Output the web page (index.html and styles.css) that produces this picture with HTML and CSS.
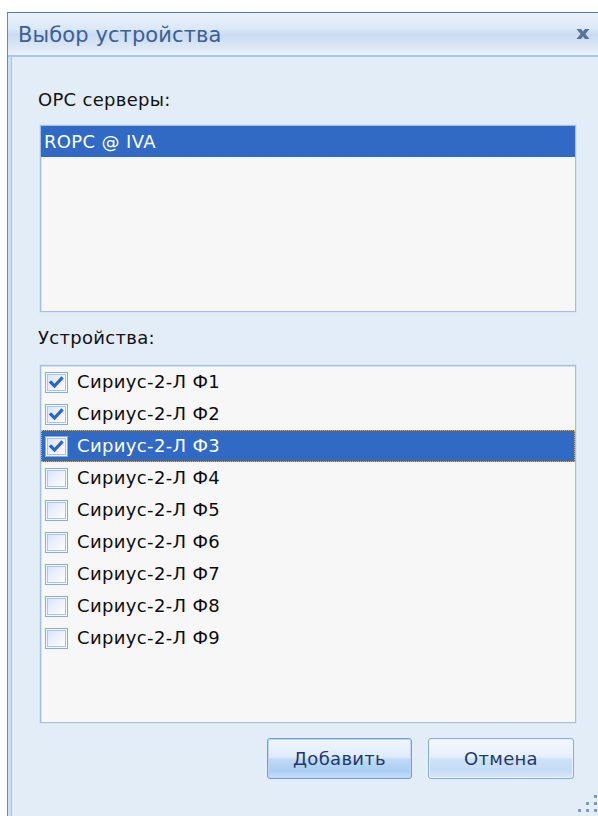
FILE: index.html
```html
<!DOCTYPE html>
<html lang="ru">
<head>
<meta charset="utf-8">
<title>Выбор устройства</title>
<link rel="stylesheet" href="styles.css">
</head>
<body>
<div class="window">
  <div class="titlebar">
    <span class="title">Выбор устройства</span>
    <svg class="close" width="16" height="12" viewBox="0 0 16 12">
      <path d="M1.5 1 H6 L8 3.6 L10 1 H14.5 L10.4 6 L14.5 11 H10 L8 8.4 L6 11 H1.5 L5.6 6 Z"/>
    </svg>
  </div>
  <div class="frame">
    <div class="content">
      <div class="label">ОРС серверы:</div>
      <div class="list servers">
        <div class="row selected">ROPC @ IVA</div>
      </div>
      <div class="label devices-label">Устройства:</div>
      <div class="list devices">
        <div class="row"><span class="check on"></span>Сириус-2-Л Ф1</div>
        <div class="row"><span class="check on"></span>Сириус-2-Л Ф2</div>
        <div class="row selected focused"><span class="check on"></span>Сириус-2-Л Ф3</div>
        <div class="row"><span class="check"></span>Сириус-2-Л Ф4</div>
        <div class="row"><span class="check"></span>Сириус-2-Л Ф5</div>
        <div class="row"><span class="check"></span>Сириус-2-Л Ф6</div>
        <div class="row"><span class="check"></span>Сириус-2-Л Ф7</div>
        <div class="row"><span class="check"></span>Сириус-2-Л Ф8</div>
        <div class="row"><span class="check"></span>Сириус-2-Л Ф9</div>
      </div>
      <div class="buttons">
        <button class="btn default">Добавить</button>
        <button class="btn">Отмена</button>
      </div>
    </div>
    <svg class="grip" width="20" height="18" viewBox="0 0 20 18">
      <rect x="16" y="0" width="3" height="3"/>
      <rect x="8" y="7" width="3" height="3"/>
      <rect x="16" y="7" width="3" height="3"/>
      <rect x="0" y="14" width="3" height="3"/>
      <rect x="8" y="14" width="3" height="3"/>
      <rect x="16" y="14" width="3" height="3"/>
    </svg>
  </div>
</div>
</body>
</html>
```
FILE: styles.css
```css
html, body {
  margin: 0;
  padding: 0;
  background: #ffffff;
  overflow: hidden;
}

body {
  width: 598px;
  height: 816px;
  font-family: "DejaVu Sans", sans-serif;
}

.window {
  margin: 12px 0 0 7px;
  width: 610px;
  height: 820px;
  display: flex;
  flex-direction: column;
  border-top: 1px solid #4f7db9;
  border-left: 1px solid #5e8bc6;
  box-sizing: border-box;
}

/* caption strip */
.titlebar {
  height: 44px;
  flex: none;
  display: flex;
  align-items: center;
  padding-left: 10px;
  box-sizing: border-box;
  background: linear-gradient(#eaf2fb 0%, #dde9f7 35%, #c9dcf3 52%, #dbe7f6 80%, #eaf1fa 100%);
  border-bottom: 2px solid #a9c5e8;
  position: relative;
}

.title {
  font-size: 21px;
  color: #3d5f93;
  letter-spacing: 0.1px;
  padding-top: 1px;
}

.close {
  position: absolute;
  left: 567px;
  top: 15px;
  fill: #5b7297;
}

/* body of the dialog with its inner frame line */
.frame {
  flex: 1;
  display: flex;
  background: #e3edf8;
  border-left: 3px solid #cfdff3;
  box-shadow: inset 1px 0 0 #a8c3e6;
  position: relative;
}

.content {
  display: flex;
  flex-direction: column;
  padding: 32px 0 0 29px;
}

.label {
  font-size: 18px;
  line-height: 22px;
  color: #111111;
  margin-left: -2px;
  letter-spacing: 0.3px;
}

.devices-label {
  margin-top: 15px;
}

.list {
  width: 536px;
  box-sizing: border-box;
  background: #f7f7f7;
  border: 1px solid #a3bfe3;
  box-shadow: inset 1px 1px 0 #d3e1f3, 0 0 0 1px #d6e4f5;
  font-size: 18px;
  letter-spacing: 0.35px;
}

.servers {
  margin-top: 14px;
  height: 187px;
}

.devices {
  margin-top: 16px;
  height: 358px;
}

.row {
  height: 32px;
  line-height: 32px;
  padding-left: 3px;
  color: #0c0c0c;
  display: flex;
  align-items: center;
  white-space: nowrap;
}

.servers .row {
  height: 31px;
  line-height: 31px;
}

.row.selected {
  background: #306ac4;
  color: #ffffff;
}

.row.focused {
  outline: 1px dotted #e6ac45;
  outline-offset: -1px;
}

.check {
  width: 23px;
  height: 21px;
  box-sizing: border-box;
  margin: 0 9px 0 1px;
  flex: none;
  border: 1px solid #86ace0;
  box-shadow: inset 0 0 0 1px #f4f8fe, inset 0 0 0 2px #a9c6ea;
  background: linear-gradient(135deg, #d6e4f6 0%, #eef4fc 55%, #ffffff 100%);
}

.check.on {
  background-image:
    url("data:image/svg+xml,%3Csvg xmlns='http://www.w3.org/2000/svg' width='21' height='19' viewBox='0 0 21 19'%3E%3Cpath d='M5 9.5 L8.5 13 L15.5 5.5' fill='none' stroke='%232c63c5' stroke-width='3.2' stroke-linecap='square'/%3E%3C/svg%3E"),
    linear-gradient(135deg, #d6e4f6 0%, #eef4fc 55%, #ffffff 100%);
  background-repeat: no-repeat;
  background-position: center;
}

.buttons {
  display: flex;
  gap: 16px;
  margin-top: 15px;
  padding-left: 227px;
}

.btn {
  width: 146px;
  height: 41px;
  box-sizing: border-box;
  font-family: "DejaVu Sans", sans-serif;
  font-size: 18px;
  letter-spacing: 0.3px;
  color: #1d3a6d;
  border: 1px solid #86ade0;
  border-radius: 3px;
  box-shadow: inset 0 0 0 1px #e9f2fc;
  background: linear-gradient(#f3f8fe 0%, #e7f0fb 45%, #cfe2f7 52%, #c4dcf6 80%, #d8e8fa 100%);
  padding: 0;
}

.btn.default {
  width: 145px;
  border-color: #6f9edb;
  box-shadow: inset 0 0 0 1px #bcd7f5;
  background: linear-gradient(#eef5fd 0%, #e0ecfa 45%, #c2dbf6 52%, #a9cdf4 82%, #c9e0f9 100%);
}

.grip {
  position: absolute;
  left: 567px;
  top: 738px;
  fill: #7c98c3;
}
```
